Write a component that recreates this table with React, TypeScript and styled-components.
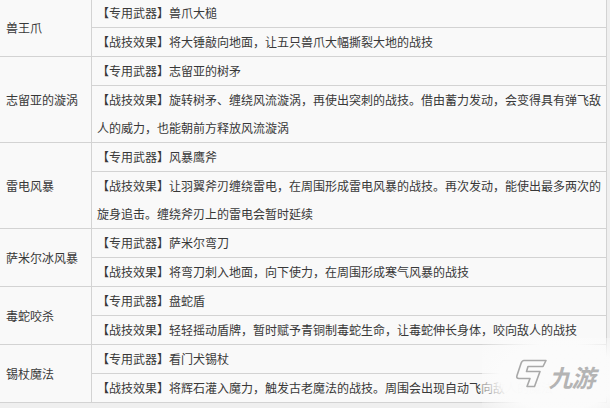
import styled, { createGlobalStyle } from 'styled-components';

const skills = [
  { name: '兽王爪', weapon: '兽爪大槌', effect: '将大锤敲向地面，让五只兽爪大幅撕裂大地的战技' },
  {
    name: '志留亚的漩涡',
    weapon: '志留亚的树矛',
    effect: '旋转树矛、缠绕风流漩涡，再使出突刺的战技。借由蓄力发动，会变得具有弹飞敌人的威力，也能朝前方释放风流漩涡',
  },
  {
    name: '雷电风暴',
    weapon: '风暴鹰斧',
    effect: '让羽翼斧刃缠绕雷电，在周围形成雷电风暴的战技。再次发动，能使出最多两次的旋身追击。缠绕斧刃上的雷电会暂时延续',
  },
  { name: '萨米尔冰风暴', weapon: '萨米尔弯刀', effect: '将弯刀刺入地面，向下使力，在周围形成寒气风暴的战技' },
  { name: '毒蛇咬杀', weapon: '盘蛇盾', effect: '轻轻摇动盾牌，暂时赋予青铜制毒蛇生命，让毒蛇伸长身体，咬向敌人的战技' },
  { name: '锡杖魔法', weapon: '看门犬锡杖', effect: '将辉石灌入魔力，触发古老魔法的战技。周围会出现自动飞向敌人的魔法' },
];

export default function App() {
  return (
    <>
      <Global />
      <Page>
        <Table>
          {skills.map((s) => (
            <Group key={s.name}>
              <Name>{s.name}</Name>
              <Details>
                <Line>【专用武器】{s.weapon}</Line>
                <Line>【战技效果】{s.effect}</Line>
              </Details>
            </Group>
          ))}
        </Table>
        <Watermark>
          <svg width="32" height="29" viewBox="0 0 32 28">
            <path
              d="M9 1 L31 1 L28 7 L13 7 L11.5 12 L25 12 L19.5 27 L12 27 L15 19 L4 19 Q1 19 2 16 L6 4 Q7 1 9 1 Z"
              fill="#fbfbfb"
              stroke="#a8a8a8"
              strokeWidth="1.6"
              strokeLinejoin="round"
            />
          </svg>
          <Brand>九游</Brand>
        </Watermark>
      </Page>
    </>
  );
}

const Global = createGlobalStyle`
  html, body {
    margin: 0;
    background: #efefef;
  }
  body {
    font-family: "Noto Sans CJK SC", "Microsoft YaHei", sans-serif;
    font-size: 12px;
    color: #383838;
  }
`;

const Page = styled.div`
  position: relative;
  width: 610px;
  height: 408px;
  overflow: hidden;
`;

const Table = styled.div`
  display: flex;
  flex-direction: column;
  width: 608px;
  margin: -2px 0 0 -1px;
  border: 1px solid #d3d3d3;
  background: #f9f9f9;
  box-sizing: border-box;
`;

const Group = styled.div`
  display: grid;
  grid-template-columns: 92px 1fr;
  & + & {
    border-top: 1px solid #d3d3d3;
  }
`;

const Name = styled.div`
  display: flex;
  align-items: center;
  padding-left: 6px;
  border-right: 1px solid #d3d3d3;
  box-sizing: border-box;
`;

const Details = styled.div`
  display: flex;
  flex-direction: column;
  min-width: 0;
`;

const Line = styled.div`
  padding: 0 2px 0 5px;
  line-height: 28px;
  & + & {
    border-top: 1px solid #d3d3d3;
  }
`;

const Watermark = styled.div`
  position: absolute;
  left: 482px;
  top: 338px;
  width: 132px;
  height: 70px;
  display: flex;
  align-items: center;
  gap: 4px;
  padding: 0 0 0 33px;
  box-sizing: border-box;
  background: radial-gradient(
    ellipse 74% 80% at 58% 55%,
    rgba(251, 251, 251, 0.99) 60%,
    rgba(251, 251, 251, 0) 100%
  );
`;

const Brand = styled.span`
  font-family: "Noto Sans CJK SC", sans-serif;
  font-size: 24px;
  font-weight: 700;
  letter-spacing: -1px;
  color: #b4b4b4;
  transform: skewX(-14deg);
  line-height: 1;
  margin-top: 7px;
  text-shadow: 0 0 1px #ffffff;
`;
